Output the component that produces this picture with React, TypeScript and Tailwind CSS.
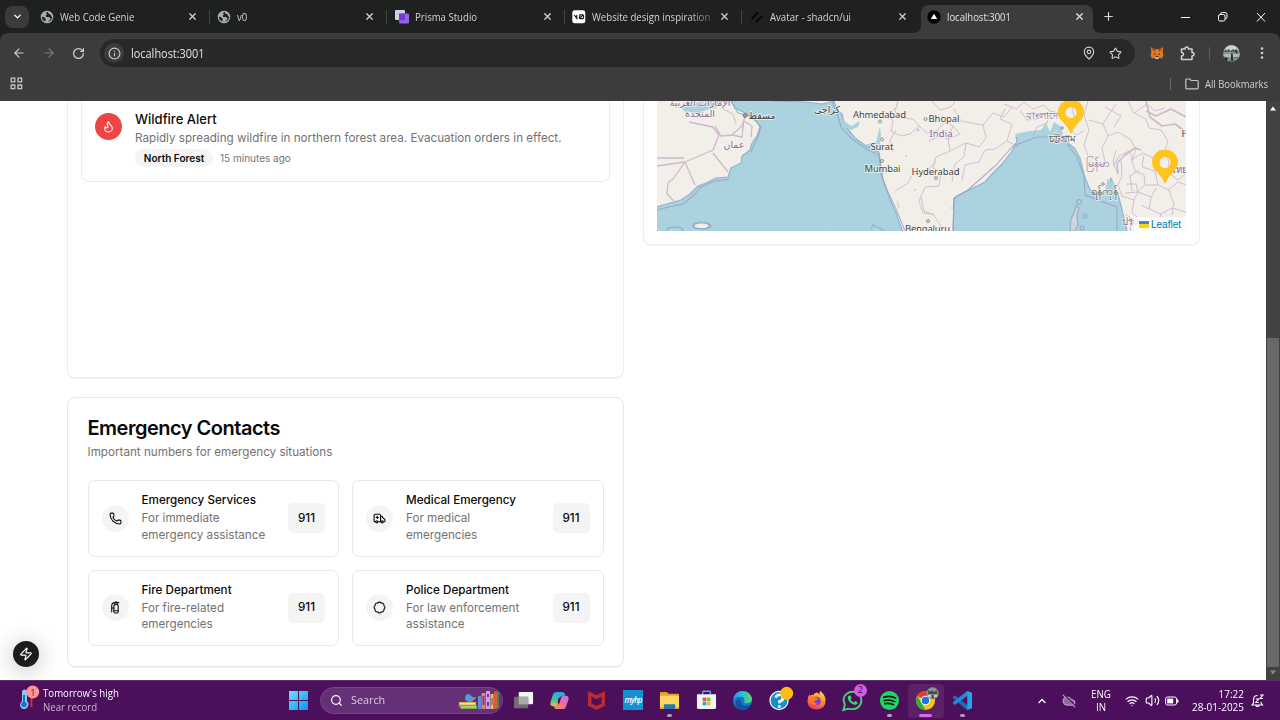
import React from "react";
import {
  Ambulance, ArrowLeft, ArrowRight, Badge, ChevronDown, ChevronUp, CloudOff, FireExtinguisher,
  Flame, Info, MapPin, Phone, Plus, RotateCw, Search, Star,
  Volume2, Wifi, X, Zap,
} from "lucide-react";

function Globe() {
  return (
    <svg width="14" height="14" viewBox="0 0 14 14">
      <circle cx="7" cy="7" r="6" fill="#a7abae" />
      <path d="M7.5 1.5 6 3l1 1.2-1.3 1.3.6 1.5H9l1.6 1.6L10 10l-1.5.8v1.7l3-1.7L13 7l-1.5-.5-1-2L8.6 3.7zM1.2 6.5l3 .8 1.7 1.9-.7 1.2.4 2.1L2.5 11z" fill="#1f2120" />
      <circle cx="7" cy="7" r="5.7" fill="none" stroke="#a7abae" strokeWidth="1.2" />
    </svg>
  );
}

function PrismaIcon() {
  return (
    <svg width="14" height="14" viewBox="0 0 14 14">
      <rect x="0" y="0" width="10" height="10" rx="1" fill="#cdd2e6" />
      <rect x="4" y="3.5" width="10" height="10" rx="1" fill="#9362e6" />
      <rect x="4" y="3.5" width="6" height="6.5" fill="#7337d3" />
    </svg>
  );
}

function V0Icon() {
  return (
    <svg width="14" height="14" viewBox="0 0 14 14">
      <rect x=".3" y=".3" width="13" height="13" rx="2.4" fill="#fff" />
      <path d="M2.2 5l2.6 3.4V5M7.6 4.8h3q1 0 1 1v1.800q0 1-1 1h-2q-1 0-1-1V5.800q0-1 1-1M7 8.600l4.200-3.600" fill="none" stroke="#111" strokeWidth="1.1" />
    </svg>
  );
}

function ShadcnIcon() {
  return (
    <svg width="14" height="14" viewBox="0 0 14 14" stroke="#050505" strokeWidth="1.8" strokeLinecap="round">
      <path d="M2 8.5 7.5 3M6.5 11.5l5-5.2" />
    </svg>
  );
}

function NextIcon() {
  return (
    <svg width="14" height="14" viewBox="0 0 14 14">
      <circle cx="7" cy="7" r="6.7" fill="#000" />
      <path d="M7 3.8 10.2 9H3.8z" fill="#fff" />
    </svg>
  );
}

const tabs = [
  { title: "Web Code Genie", icon: <Globe /> },
  { title: "v0", icon: <Globe /> },
  { title: "Prisma Studio", icon: <PrismaIcon /> },
  { title: "Website design inspiration", icon: <V0Icon />, fade: true },
  { title: "Avatar - shadcn/ui", icon: <ShadcnIcon /> },
];

function TabStrip() {
  return (
    <div className="flex h-[33px] items-center bg-[#1f2120] text-[#d3d4d4]">
      <div className="ml-[5px] flex h-[22px] w-6 items-center justify-center rounded-[8px] bg-[#3b3b3b]">
        <ChevronDown size={11} strokeWidth={3} className="text-white" />
      </div>
      <div className="ml-[11px] flex h-full items-center">
        {tabs.map((t) => (
          <div key={t.title} className="flex h-full w-[177.4px] items-center">
            <div className="flex w-5 shrink-0">{t.icon}</div>
            <div className={"w-[118px] shrink-0 whitespace-nowrap text-[11px] " + (t.fade ? "[mask-image:linear-gradient(to_right,#000_82%,rgba(0,0,0,0.35))]" : "")}>
              <span className="mt-px inline-block origin-left scale-x-[0.873]">{t.title}</span>
            </div>
            <X size={11} strokeWidth={2.6} className="ml-[9px] shrink-0" />
            <div className={"ml-[11px] h-[14px] w-px " + (t.title.startsWith("Avatar") ? "" : "bg-[#444]")} />
          </div>
        ))}
      </div>
      <div className="relative -ml-[6px] mt-[5px] flex h-7 w-[172px] items-center rounded-t-[8px] bg-[#3c3c3c] pb-[5px] pl-[6px]">
        <svg className="absolute -left-2 bottom-0" width="8" height="8"><path d="M8 0v8H0Q8 8 8 0" fill="#3c3c3c" /></svg>
        <svg className="absolute -right-2 bottom-0" width="8" height="8"><path d="M0 0v8h8Q0 8 0 0" fill="#3c3c3c" /></svg>
        <NextIcon />
        <div className="ml-[6px] w-[118px] text-[11px] text-[#e3e3e3]"><span className="mt-px inline-block origin-left scale-x-[0.863]">localhost:3001</span></div>
        <X size={11} strokeWidth={2.6} className="ml-[9px] text-[#e3e3e3]" />
      </div>
      <Plus size={13} strokeWidth={2.2} className="ml-[9px]" />
      <svg className="ml-[65px]" width="100" height="14" viewBox="0 0 100 14" fill="none" stroke="#fff" strokeWidth="1">
        <path d="M1 7.5h9" />
        <rect x="38.5" y="4.5" width="6.5" height="6.5" rx="1.5" />
        <path d="M40.5 4.3q0-1.8 1.8-1.8H45q2 0 2 2v2.8q0 1.7-1.7 1.7" />
        <path d="m77 3 8 8.500M85 3l-8 8.500" />
      </svg>
    </div>
  );
}

function Fox() {
  return (
    <svg width="14" height="14" viewBox="0 0 14 14">
      <path d="m.7 1 4.6 2.2h3.400L13.300 1l-.6 5 .7 3-1.200 3.500-3-.8-1.400 1.300H6.200L4.800 11.700l-3 .8L.6 9l.7-3z" fill="#e8781f" />
      <path d="m.7 1 4.600 2.200L4.600 6zM13.300 1 8.700 3.200 9.400 6z" fill="#9b4a22" />
      <path d="M5.200 11.500h3.600L8.400 13H5.600z" fill="#e6d6c4" />
      <path d="M4 7.600l1.600.9M10 7.600l-1.600.9M5.800 10.600h2.400" stroke="#252525" strokeWidth="1" />
    </svg>
  );
}

function Avatar() {
  return (
    <svg width="17" height="17" viewBox="0 0 17 17">
      <defs><clipPath id="av"><circle cx="8.500" cy="8.500" r="8.300" /></clipPath></defs>
      <g clipPath="url(#av)">
        <rect width="17" height="17" fill="#8e9590" />
        <path d="M0 0h17v5l-3 1-2-2-2 3-3-2-2 2-5-1z" fill="#c9d3d8" />
        <path d="M2 4l2 1.500 2-2 1 3 3-2.500 2 1.500 2-2 1 3.500H1z" fill="#4d6350" />
        <path d="M0 9h17v3H0z" fill="#b4b8b4" />
        <path d="M8 8.500h1.800v2.500l.7 5H7.500l.5-4zM12 5l3 2-2 2z" fill="#2b3335" />
        <path d="M1 12l4 1-1 3M11 13l4-1" stroke="#6b726d" strokeWidth="1.200" />
      </g>
    </svg>
  );
}

function Toolbar() {
  return (
    <div className="bg-[#1f2120]">
      <div className="flex h-[68px] flex-col rounded-t-[8px] bg-[#3c3c3c] text-[#d0d1d1]">
        <div className="mt-[6px] flex h-7 items-center">
          <ArrowLeft size={14} className="ml-[12px]" />
          <ArrowRight size={14} className="ml-[16px] text-[#7b7b7b]" />
          <RotateCw size={13} strokeWidth={2.3} className="ml-[16px]" />
          <div className="ml-[15px] flex h-7 w-[1035px] items-center rounded-full bg-[#282828] pl-1">
            <div className="flex size-5 items-center justify-center rounded-full bg-[#3c3c3c]">
              <Info size={13} />
            </div>
            <div className="ml-[7px] flex-1 text-[12px] text-[#e3e3e3]"><span className="mt-px inline-block origin-left scale-x-[0.91]">localhost:3001</span></div>
            <MapPin size={14} />
            <Star size={13} className="ml-[13px] mr-[13px]" />
          </div>
          <div className="ml-[15px]"><Fox /></div>
          <svg className="ml-[16px]" width="15" height="15" viewBox="0 0 15 15" fill="none" stroke="#d0d1d1" strokeWidth="1.500" strokeLinejoin="round">
            <path d="M1.500 3h3.500q0-2 1.700-2t1.700 2H12v3.500q2 0 2 1.700T12 10v3.500H1.500V10q2-.2 2-1.800t-2-1.700z" />
          </svg>
          <div className="ml-[14px] h-[13px] w-px bg-[#5d5d5d]" />
          <div className="ml-[13px]"><Avatar /></div>
          <svg className="ml-[20px]" width="4" height="14" fill="#d0d1d1"><circle cx="2" cy="2.500" r="1.300" /><circle cx="2" cy="7" r="1.300" /><circle cx="2" cy="11.500" r="1.300" /></svg>
        </div>
        <div className="flex h-[33px] items-center">
          <svg className="ml-[10px]" width="13" height="13" viewBox="0 0 13 13" fill="none" stroke="#c4c5c5" strokeWidth="1.300"><path d="M1.200 1.200h3.600v3.600H1.200zM8 1.200h3.600v3.600H8zM1.200 8h3.600v3.600H1.200zM8 8h3.600v3.600H8z" /></svg>
          <div className="ml-auto h-[12px] w-px bg-[#666]" />
          <svg className="ml-[14px]" width="14" height="12" viewBox="0 0 14 12" fill="none" stroke="#c4c5c5" strokeWidth="1.200"><path d="M.8 2q0-1 1-1h3l1.400 1.500h6q1 0 1 1v6.300q0 1-1 1H1.800q-1 0-1-1z" /></svg>
          <div className="ml-[6px] mr-[12px] w-[63px] whitespace-nowrap text-[11px]"><span className="mt-px inline-block origin-left scale-x-[0.86]">All Bookmarks</span></div>
        </div>
      </div>
    </div>
  );
}

const land = [
  "M650 95H728L735 108L745 113L752 117L757 122L760 127L757 136L752 143L750 150L742 156L741 163L731 168L728 177L716 178L706 183L698 186L690 194L681 200L670 203L650 209Z",
  "M756 95L773 101L805 102L822 104L834 101L837 110L842 114L845 126L855 138L866 146L879 152L880 160L883 180L890 199L896 213L904 235H953L954 199L957 196L967 191L985 182L993 173L1003 163L1012 151L1017 141L1016 137L1031 134L1050 134L1059 131L1066 141L1075 149L1080 158L1084 175L1090 190L1101 194L1108 191L1111 178L1118 194L1122 210L1128 235H1192V95Z",
  "M693 224l6-2 8 1 3 3-5 3-10-1z",
];
const borders = [
  "M689 122l24 5 6 8-6 15-28 12-28 4M685 162l10 23M657 158h27M715 126l6 10 11-1 10-9 3-9M713 153l15 19M732 135l10 2 2-18M744 121l8 5-1 11M685 162l-12 17-5 4-1 11 7 7",
  "M720 101l3 8 10 5 3 10",
  "M898 101l-3 11 8 6 10 1 6 7-9 8-9 2-10-5 2-10-4-7 9-9M896 130l-6 10 3 12M919 126l8 7 10-2 7-9 9 4 7 8-12 5-8-3-11 5M932 101l8 9 11-3 4-6M953 126l-5 12 2 13-14 6-3 11 8 4-2 14-14 1-6 14 4 12 10 1 8 12M895 191l13-8 4-8 14-4 10-9M921 197l3 14 10 4M897 201l2 7M950 151l16-8 13 4 7-9-3-13 10-12 11 4 8-10M966 143l-2 14-9 7-3 18M983 125l-22-4-7-12M1005 109l-5 10 12 5-5 17 12 6M1007 141l-12 8-10 1-6 12-14 3-3 15",
  "M1004 104l12 5 8-7 9 7 11-4 6 6-3 12-10 4-4 9M1020 110l7 10 10-1M1050 111l12 3 4 11 9-5-3-12 8-6M1066 125l10 10 8-4M1088 101l-4 14 5 15-5 15 4 11M1089 120l14 4 5 12-6 12 3 14-12 6M1103 124l7-11 6-9M1105 107l16 9-7 11M1108 136l10-4 12 7 6 10-4 12M1116 150l-3 12 5 12M1128 101l6 12 12 6 3 9 12 2 7 11-4 14M1134 113l13-9 8 7 10-3",
  "M1113 166l6-10 10-5 4 8 10-6 10 5 7-8 8 8 2 16 8 6 8-7M1121 160l1 16-4 9 4 11M1131 158l4 13 9 4 1 10-8 7-12 1M1144 155l-2 12 13 4 5-10M1155 171l3 14 11 5 4 12M1122 196l12 4 4-8 13 5 5-9M1134 200l-2 13 9 7M1151 197l-2 12 12 5 11-6 14 4M1161 214l-5 15M1141 205l8 4M1168 190l10-8 8 3M1125 214l7 5-2 12M1139 170l-9 6 2 15M1162 170l8 5 5-6M1174 202l-2 13M1146 185l12 0M1138 192l-2-8-10 0",
];

function MapView() {
  return (
    <svg className="block w-full" viewBox="657 101 529 130" height="130" preserveAspectRatio="none" fontFamily='"Noto Sans", "DejaVu Sans", sans-serif'>
      <rect x="657" y="101" width="529" height="130" fill="#aad3df" />
      <g fill="#f2efe9" stroke="#8fb4cf" strokeWidth="1.200" strokeLinejoin="round">
        {land.map((d) => <path key={d} d={d} />)}
      </g>
      <g fill="#aad3df">
        <path d="M678 104q9 4 15 1 5-4 9-4h22l-8 7-10 2-7 4-14-2z" />
        <path d="M843 120l8 6 9-5-2 6-7 3-7-3zM864 145l12-3 3-12 1-3 1 8-1 6 1 10z" />
        <path d="M1016 137l-1-3 15-3 11-1 5-7 4 9 4-10 6 4 3 8-3 3-9 1-15-1zM1104 194l4-16 3 5 1-5 4 15zM1060 102l4 5-2 6z" />
        <circle cx="918" cy="130" r="1.400" /><circle cx="906" cy="156" r="1" /><circle cx="915" cy="190" r="1" /><circle cx="952" cy="208" r="1" />
      </g>
      <g fill="none" stroke="#c3a6c6" strokeWidth=".9" strokeLinejoin="round" opacity=".75">
        {borders.map((d) => <path key={d} d={d} strokeWidth={d.startsWith("M689") ? 1.300 : 0.900} />)}
        <path d="M1118 174l-1-11 8-8 10-7 6 2" strokeWidth="1.600" />
        <path d="M1146 101l4 16 12 9 13-2 11 8M1146 111l10 5 15-7 15 8" strokeWidth="1.600" />
      </g>
      <g fill="none" stroke="#9c9cc4" strokeWidth="1.100" opacity=".8">
        <path d="M832 101l5 12 4 14 11 12 16 11 11 5 2 19 6 16 9 19 9 22M953 231l1-33 14-8 28-25 17-19 24-9h21l8 6 11 14 7 19 1 19 32 12v24M871 229l2-4 12 6M731 101l7 12 14 4 9 10-3 10-7 15" />
        <path d="M657 210l12-3 14-3 11-9 7-8 14-6 15-2" />
        <ellipse cx="702" cy="226" rx="9" ry="3" /><ellipse cx="675" cy="230" rx="8" ry="3" />
        <circle cx="1079" cy="202" r="2.500" /><circle cx="1085" cy="216" r="2" /><circle cx="1082" cy="228" r="2" />
        <path d="M1076 206l3 2-2 7 1 10-3 6h-5l1-12 3-6z" fill="#d9d7dd" />
      </g>
      <path d="M830 101v130" stroke="#b9dce5" strokeWidth=".4" />
      <g fill="none" stroke="#777" strokeWidth=".8">
        <circle cx="745" cy="115.500" r="2" fill="#999" /><circle cx="880" cy="121.500" r="1.500" /><circle cx="882" cy="139.500" r="1.500" />
        <circle cx="882" cy="161" r="1.500" /><circle cx="925.500" cy="119" r="1.500" /><circle cx="936" cy="178" r="1.500" /><circle cx="928" cy="221" r="1.500" />
        <circle cx="1062" cy="128" r="1.300" /><circle cx="1103" cy="184" r="1.300" />
      </g>
      <g fontSize="9.500" fill="#444" stroke="#f6f4f0" strokeWidth="2" strokeOpacity=".7" paintOrder="stroke" textAnchor="middle">
        <text x="879.500" y="118" textLength="53">Ahmedabad</text>
        <text x="944" y="122" textLength="31">Bhopal</text>
        <text x="882" y="150" textLength="23">Surat</text>
        <text x="882.500" y="172" textLength="36">Mumbai</text>
        <text x="935.500" y="175" textLength="48">Hyderabad</text>
        <text x="927.500" y="232" textLength="45">Bengaluru</text>
        <text x="762" y="119">مسقط</text>
        <text x="827" y="113">كراچی</text>
        <text x="1062" y="141.500">চট্টগ্রাম</text>
        <text x="1104" y="195" fontSize="11">ရန်ကုန်</text>
        <text x="1185" y="136.500">H</text>
        <g fill="#8d6a9c">
          <text x="941" y="137" textLength="23">India</text>
          <text x="700" y="106">الإمارات العربية</text>
          <text x="700" y="117">المتحدة</text>
          <text x="734" y="148">عمان</text>
          <text x="1045" y="119">বাংলাদেশ</text>
          <text x="1097" y="167" fontSize="11">မြန်မာ</text>
          <text x="1179" y="173">ไทย</text>
          <text x="1130" y="225">ประ</text>
        </g>
      </g>
      <g fill="#ffc41d" fillRule="evenodd">
        <path d="M1071 134q-3-7-8-12-5-4-5-10a13 12.500 0 0 1 26 0q0 6-5 10-5 5-8 12zm0-27a5.500 5.500 0 1 0 0 11 5.500 5.500 0 0 0 0-11z" />
        <path d="M1165 184q-3-7-8-12-5-4-5-10a13 12.500 0 0 1 26 0q0 6-5 10-5 5-8 12zm0-27a5.500 5.500 0 1 0 0 11 5.500 5.500 0 0 0 0-11z" />
      </g>
    </svg>
  );
}

const contacts = [
  { name: "Emergency Services", lines: ["For immediate", "emergency assistance"], Icon: Phone },
  { name: "Medical Emergency", lines: ["For medical", "emergencies"], Icon: Ambulance },
  { name: "Fire Department", lines: ["For fire-related", "emergencies"], Icon: FireExtinguisher },
  { name: "Police Department", lines: ["For law enforcement", "assistance"], Icon: Badge },
];

function Page() {
  return (
    <div className="flex h-[579px] bg-white font-['Inter',sans-serif] text-[#0a0a0a]">
      <div className="relative flex min-w-0 flex-1 items-start overflow-hidden pl-[67px]">
        <div className="flex w-[557px] flex-col">
          <div className="h-[277px] rounded-b-[8px] border border-t-0 border-[#ececec] px-[13px] shadow-2xs">
            <div className="flex h-[81px] rounded-b-[8px] border border-t-0 border-[#ececec] px-[13px] pt-[9px]">
              <div className="mt-[3px] flex size-[27px] items-center justify-center rounded-full bg-[#ef4444]">
                <Flame size={13} className="text-white" />
              </div>
              <div className="ml-[13px] flex flex-col">
                <div className="text-[13px] font-medium leading-[18px]">Wildfire Alert</div>
                <div className="mt-px text-[11.67px] leading-[18px] text-[#737373]">Rapidly spreading wildfire in northern forest area. Evacuation orders in effect.</div>
                <div className="mt-[2px] flex items-center">
                  <div className="flex h-[18px] w-[78px] items-center justify-center rounded-full bg-[#f4f4f4] text-[10px] font-semibold">North Forest</div>
                  <div className="ml-[7px] text-[10px] text-[#737373]">15 minutes ago</div>
                </div>
              </div>
            </div>
          </div>
          <div className="mt-[19px] h-[270px] rounded-[8px] border border-[#e8e8e8] px-[19.500px] pt-[17px] shadow-2xs">
            <div className="text-[20px] font-semibold leading-[27px] tracking-[-0.5px]">Emergency Contacts</div>
            <div className="mt-[1px] text-[11.67px] leading-[18px] text-[#737373]">Important numbers for emergency situations</div>
            <div className="mt-[19px] grid grid-cols-2 gap-x-[13px] gap-y-[13px]">
              {contacts.map(({ name, lines, Icon }) => (
                <div key={name} className="flex h-[76.500px] items-center rounded-[7px] border border-[#e8e8e8] px-[13px]">
                  <div className="flex size-[27px] shrink-0 items-center justify-center rounded-full bg-[#f4f4f4]">
                    <Icon size={13} />
                  </div>
                  <div className="-mt-[2px] ml-[13px] flex-1 whitespace-nowrap text-[11.67px] leading-[16.500px]">
                    <div className="leading-[18px] font-medium">{name}</div>
                    <div className="mt-px text-[#737373]">{lines[0]}<br />{lines[1]}</div>
                  </div>
                  <div className="flex h-[30px] w-[37px] items-center justify-center rounded-[5px] bg-[#f4f4f4] text-[11.67px] font-medium">911</div>
                </div>
              ))}
            </div>
          </div>
        </div>
        <div className="ml-[19px] h-[144px] w-[557px] rounded-b-[8px] border border-t-0 border-[#ececec] px-[13px] shadow-2xs">
          <div className="relative">
            <MapView />
            <div className="absolute bottom-0 right-0 flex h-[14px] w-[52px] items-center bg-white/80 pl-[5px] font-['Liberation_Sans',sans-serif] text-[10px] text-[#0078a8]">
              <svg width="10" height="7" className="mr-[2px]"><path fill="#4c7be1" d="M0 0h10v4H0z" /><path fill="#ffd500" d="M0 3h10v4H0z" /></svg>
              Leaflet
            </div>
          </div>
        </div>
        <div className="absolute left-[13px] top-[540px] flex size-[26px] items-center justify-center rounded-full bg-[#1c1c1c] text-white shadow-[0_3px_20px_4px_rgba(0,0,0,0.16)]">
          <Zap size={14} />
        </div>
      </div>
      <div className="flex w-[14px] flex-col items-center bg-[#424242] pt-[5px]">
        <svg width="8" height="5" className="shrink-0"><path d="M4 0.500 7 4.500H1z" fill="#fff" /></svg>
        <div className="mt-[227px] h-[329px] w-3 shrink-0 bg-[#686868]" />
        <svg width="8" height="5" className="mt-[3px] shrink-0"><path d="M4 4.500 7 0.500H1z" fill="#8b8b8b" /></svg>
      </div>
    </div>
  );
}

function Books() {
  return (
    <svg width="42" height="20" viewBox="0 0 42 20">
      <path d="M1 12h17v3H1z" fill="#e9b04c" /><path d="M0 15h19v4H3z" fill="#6fae45" /><path d="M2 13h15v1.500H2zM3 16.500h15v1H3z" fill="#f4dfaa" />
      <path d="M7 9q0-5 4-5l5 4q0 4-4 4-4 0-5-3z" fill="#4e9be0" /><path d="M15 8l3-1-2 3z" fill="#f09b40" />
      <path d="M20 6h3v13h-3z" fill="#5c8fd5" /><path d="M23.500 3h4v16h-4z" fill="#e9807c" /><path d="M28 1h4v18h-4z" fill="#c7a0e8" /><path d="M32.500 4h3v15h-3z" fill="#f0bf63" /><path d="m36 2 3-1v18h-3z" fill="#d8602e" /><path d="M39 2h2v16h-2z" fill="#3b8d58" />
      <path d="M24.500 6h2v9h-2zM29 4h2v3h-2zM29 12h2v4h-2zM33.500 8h1v7h-1z" fill="#7a3c93" />
    </svg>
  );
}

function AppIcon({ name }: { name: string }) {
  switch (name) {
    case "taskview":
      return <g><rect x="6" y="2" width="15" height="13" rx="1" fill="#f4f4f4" /><rect x="1" y="7" width="15" height="12" rx="1" fill="#757575" opacity=".9" /><path d="M6 7h10v8H6z" fill="#aaa" /></g>;
    case "copilot":
      return (
        <g>
          <path d="M8 2h6q2 0 2.500 2l.5 2h-3q-2 0-2.500 2L9.500 15q-.5 2-2.500 2H4q-3 0-2.500-4L4 5q1-3 4-3z" fill="url(#cpa)" />
          <path d="M14 20H8q-2 0-2.500-2L5 16h3q2 0 2.500-2L12.500 8q.5-2 2.500-2h3q3 0 2.500 4L18 17q-1 3-4 3z" fill="url(#cpb)" />
          <path d="M10 8h2.500l-1.500 6H9z" fill="#4b0f5b" />
        </g>
      );
    case "mcafee":
      return <path d="M2 1l9 4.500L20 1v15.500l-9 4.500-9-4.500zM5.800 7v7.200l5.200 2.600 5.200-2.600V7L11 9.800z" fill="#b92b31" fillRule="evenodd" />;
    case "files":
      return <g><path d="M1 3q0-1 1-1h6l2 2h10q1 0 1 1v5H1z" fill="#e5a522" /><rect x="1" y="6" width="20" height="14" rx="1" fill="#fdd663" /><path d="M5 20v-4q0-1 1-1h10q1 0 1 1v4z" fill="#2479b8" /><path d="M1 18h4v2H1zM17 18h4v2h-4z" fill="#eba623" /></g>;
    case "store":
      return <g><path d="M7 5V2q0-.7.7-.7h6.600q.7 0 .7.700v3" fill="none" stroke="#57aee0" strokeWidth="1.500" /><path d="M1 4.500h20V18q0 2-2 2H3q-2 0-2-2z" fill="#f1f3f6" /><path d="M7 8h3.700v3.700H7z" fill="#f15325" /><path d="M11.300 8H15v3.700h-3.700z" fill="#80bb2c" /><path d="M7 12.300h3.700V16H7z" fill="#1ba6ea" /><path d="M11.300 12.300H15V16h-3.700z" fill="#fdb913" /></g>;
    case "edge":
      return <g><circle cx="11" cy="11" r="10" fill="#1477c9" /><path d="M1.200 10Q3 1 11 1t10 8q0 5-6 5-3 0-2-2 1-5-4-5-5 0-7.800 3z" fill="url(#edg)" /><path d="M8 9q-4 7 4 10 4 1 7-1.500Q16 21 11 21q-8-1-7-8 1-4 4-4z" fill="#174f9e" /><path d="M9 10q-1 5 4 6.500 3 .8 6-1l1 .5-3 3q-9 1-10-5 0-3 2-4z" fill="#0d3b7d" opacity=".6" /></g>;
    case "help":
      return <g><circle cx="10.500" cy="11" r="9.500" fill="#178fc9" stroke="#fff" strokeWidth="1.300" /><path d="M7 8q1-3 4-3t3.500 3-3.500 4v2M10.800 16v2.500" fill="none" stroke="#fff" strokeWidth="2.800" /><circle cx="18.500" cy="3.500" r="6.800" fill="#ffbd12" /></g>;
    case "firefox":
      return <g><path d="M11 2.500Q13 3 14 5q0-3 1-4 5 4 5.500 9 .5 10-9.500 10.500Q2 20 1.500 12 1.500 7 4 4.500L4.500 6Q6 4.500 8 5q1-2 3-2.500z" fill="url(#ffx)" /><circle cx="11" cy="11.500" r="4.500" fill="#7544d4" /><path d="M4 7q4-1 6 1l3 1q-1 2-4 2-1 4 4 3-5 4-8-1-2-3-1-6z" fill="#ff7a25" /></g>;
    case "whatsapp":
      return <g><path d="M1.500 21l1.500-5.500Q-.5 8 5 4q5-4 11-.5 5.500 4 4 10-3 8.500-13.500 6z" fill="none" stroke="#4ccf71" strokeWidth="2" /><path d="M7 6q2-1 2.500 1l.5 1.500-1 1.500q1 2 3.500 3l1.500-1.500 2.500 1.500q-.5 3-3.500 2.500Q7 14 6 8.500q0-2 1-2.500z" fill="#4ccf71" /></g>;
    case "spotify":
      return <g><circle cx="11" cy="11" r="10" fill="#1ed760" /><path d="M5 7.500q7-2 12.500 1M5.500 11q6-1.500 11 1.200M6 14.300q5-1 9 1" stroke="#121212" strokeWidth="1.700" fill="none" strokeLinecap="round" /></g>;
    case "chrome":
      return (
        <g>
          <circle cx="11" cy="11" r="10" fill="#fbc116" />
          <path d="M11 11 2.300 6Q5 1 11 1q6 0 8.700 5H11z" fill="#e33b2e" /><path d="M2.300 6 11 21Q4 21 1.500 14q-1-4 .8-8z" fill="#2da94f" />
          <circle cx="11" cy="11" r="5" fill="#fff" /><circle cx="11" cy="11" r="3.900" fill="#1a73e8" />
          <g transform="translate(12 -3) scale(.8)"><circle cx="8" cy="8" r="8" fill="#8c938f" /><path d="M2 4l3 2 2-2 3 2.500 4-2.500v5H2zM7 10h2.500v5H7z" fill="#414f46" /><path d="M2 10.500h4v2H2zM10 10.500h4v2h-4z" fill="#deded9" /></g>
        </g>
      );
    case "vscode":
      return <g><path d="M16 1l5 2v16l-5 2L5.500 11.500z" fill="#24a3ee" /><path d="M16 6v10L9 11z" fill="#4b0f5b" /><path d="M1 7l2-1.500L16 16v5L1 8.500z" fill="#1374b9" /><path d="M1 14l2 1.700L16 6V1L1 12.700z" fill="#1c8bd2" /></g>;
    default:
      return null;
  }
}

const apps = ["taskview", "copilot", "mcafee", "myhp", "files", "store", "edge", "help", "firefox", "whatsapp", "spotify", "chrome", "vscode"];
const running = ["files", "spotify", "vscode"];

function Taskbar() {
  return (
    <div className="flex h-10 items-center border-t border-[#5b3268] bg-[#4b0f5b] text-white">
      <svg width="0" height="0" className="absolute">
        <defs>
          <linearGradient id="cpa" x1="0" y1="0" x2="0" y2="1"><stop stopColor="#28a5ed" /><stop offset=".55" stopColor="#3dc6a0" /><stop offset="1" stopColor="#efc42e" /></linearGradient>
          <linearGradient id="cpb" x1="1" y1="0" x2="0" y2="1"><stop stopColor="#a67cf4" /><stop offset=".5" stopColor="#f26aa0" /><stop offset="1" stopColor="#fb9b45" /></linearGradient>
          <linearGradient id="edg"><stop stopColor="#1b9ddd" /><stop offset=".5" stopColor="#2bc3d2" /><stop offset="1" stopColor="#62d35e" /></linearGradient>
          <linearGradient id="ffx" x1=".7" y1="0" x2=".3" y2="1"><stop stopColor="#ffe14a" /><stop offset=".45" stopColor="#ff8a2c" /><stop offset="1" stopColor="#f0306a" /></linearGradient>
          <linearGradient id="win" x1="0" y1="0" x2="1" y2="1"><stop stopColor="#6fe0fb" /><stop offset="1" stopColor="#0c94ee" /></linearGradient>
        </defs>
      </svg>
      <svg className="-mt-[3px] ml-[17px]" width="24" height="28" viewBox="0 0 24 28">
        <path d="M14.500 13v9" stroke="#e02b2b" strokeWidth="1.800" />
        <path d="M5 7q0-2.500 2.500-2.500T10 7v9q2 2 1.500 4-1 4-4.500 4t-4-4q0-2 2-4z" fill="#8cc8f2" /><path d="M7 10v7" stroke="#1672c4" strokeWidth="2" /><circle cx="7" cy="19.500" r="2.800" fill="#1672c4" />
        <circle cx="15.700" cy="7" r="6.500" fill="#ff9696" /><text x="13.200" y="10.500" fontSize="9" fill="#391644" fontFamily="Open Sans, sans-serif">1</text>
      </svg>
      <div className="ml-[2px] w-[100px] whitespace-nowrap text-[10.500px] leading-[13.500px]">
        <div className="origin-left scale-x-[0.92]">Tomorrow's high</div>
        <div className="origin-left scale-x-[0.92] text-[#cbb6d1]">Near record</div>
      </div>
      <svg className="ml-[146px]" width="19" height="19" fill="url(#win)"><path d="M0 0h9v9H0zM10 0h9v9h-9zM0 10h9v9H0zM10 10h9v9h-9z" /></svg>
      <div className="-mt-px ml-[12px] flex h-[27px] w-[183px] items-center rounded-full border border-[#774489] bg-[#653075] pl-[9px]">
        <Search size={13} strokeWidth={2.200} />
        <div className="ml-[8px] flex-1 text-[11.500px] text-[#dccce1]"><span className="inline-block origin-left scale-x-[0.94]">Search</span></div>
        <div className="mr-[2px]"><Books /></div>
      </div>
      <div className="ml-[2px] flex h-full items-center">
        {apps.map((a) => (
          <div key={a} className={"relative flex h-[34px] w-[36.600px] items-center justify-center pb-px " + (a === "chrome" ? "rounded-[4px] bg-[#5a2169]" : "")}>
            {a === "myhp" ? (
              <div className="flex size-5 items-center justify-center bg-[#0f93d2] text-[8px] font-semibold italic tracking-[-0.8px]">myhp</div>
            ) : (
              <svg width="21" height="21" viewBox="0 0 22 22" overflow="visible"><AppIcon name={a} /></svg>
            )}
            {a === "whatsapp" && <div className="absolute right-[4px] top-0 flex size-[13px] items-center justify-center rounded-full bg-[#d45be2] text-[9px] text-[#2c1034]">2</div>}
            {running.includes(a) && <div className="absolute bottom-[1px] h-[2.500px] w-[5px] rounded-full bg-[#b79cbf]" />}
            {a === "chrome" && <div className="absolute bottom-[1px] h-[2.500px] w-[13px] rounded-full bg-[#dc69e8]" />}
          </div>
        ))}
      </div>
      <ChevronUp size={12} strokeWidth={2.500} className="ml-[55px]" />
      <CloudOff size={14} className="ml-[14px] fill-[#8d6b98] text-[#b79fbf]" />
      <div className="ml-[14px] w-[22px] text-center text-[10.500px] leading-[13px]"><div className="scale-x-[0.93]">ENG</div><div className="scale-x-[0.93]">IN</div></div>
      <Wifi size={14} className="ml-[13px]" />
      <Volume2 size={15} strokeWidth={1.800} className="ml-[6px]" />
      <svg className="ml-[5px]" width="14" height="10" viewBox="0 0 14 10"><rect x=".6" y="1" width="11" height="8" rx="2" fill="none" stroke="#fff" /><rect x="2.200" y="2.600" width="6" height="4.800" fill="#fff" /><path d="M12.500 3.500q1.500 1.500 0 3z" fill="#fff" stroke="#fff" /></svg>
      <div className="ml-[10px] w-[55px] whitespace-nowrap text-right text-[10.500px] leading-[13px]"><div className="origin-right scale-x-[0.95]">17:22</div><div className="origin-right scale-x-[0.95]">28-01-2025</div></div>
      <svg className="ml-[7px]" width="13" height="14" viewBox="0 0 13 14" fill="none" stroke="#fff" strokeWidth="1.100"><path d="M6.500 1.500Q2.500 1.500 2.500 6v3L1 11h10.500L10 9V8M4.500 11q2 3.500 4 0M4.800 5h3L4.800 8.500h3M9 1h3L9 4.500h3" /></svg>
    </div>
  );
}

export default function App() {
  return (
    <div className="flex h-[720px] w-[1280px] flex-col overflow-hidden font-['Open_Sans',sans-serif]">
      <TabStrip />
      <Toolbar />
      <Page />
      <Taskbar />
    </div>
  );
}
